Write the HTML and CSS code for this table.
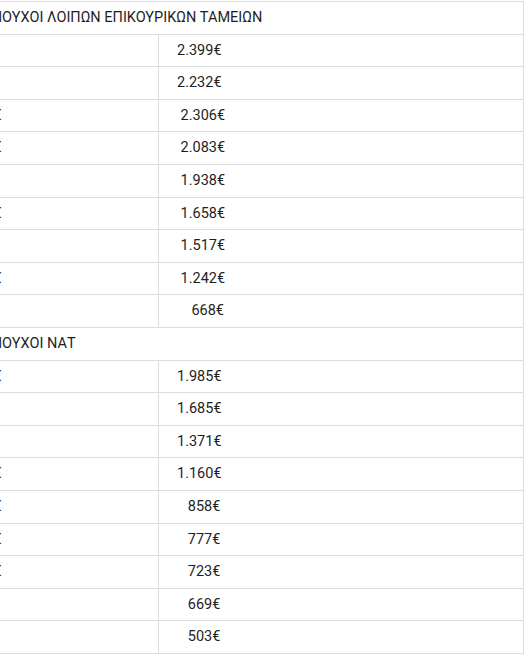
FILE: index.html
```html
<!DOCTYPE html>
<html lang="el">
<head>
<meta charset="utf-8">
<title>Συντάξεις</title>
<link rel="stylesheet" href="styles.css">
</head>
<body>
<div class="viewport">
<table class="pensions">
  <colgroup>
    <col class="c-label">
    <col class="c-value">
  </colgroup>
  <tbody>
    <tr class="section"><td colspan="2">ΣΥΝΤΑΞΙΟΥΧΟΙ ΛΟΙΠΩΝ ΕΠΙΚΟΥΡΙΚΩΝ ΤΑΜΕΙΩΝ</td></tr>
    <tr><td class="label">985€</td><td>2.399€</td></tr>
    <tr><td class="label">970€</td><td>2.232€</td></tr>
    <tr><td class="label">1.940€</td><td>&nbsp;2.306€</td></tr>
    <tr><td class="label">1.805€</td><td>&nbsp;2.083€</td></tr>
    <tr><td class="label">960€</td><td>&nbsp;1.938€</td></tr>
    <tr><td class="label">1.520€</td><td>&nbsp;1.658€</td></tr>
    <tr><td class="label">930€</td><td>&nbsp;1.517€</td></tr>
    <tr><td class="label">1.240€</td><td>&nbsp;1.242€</td></tr>
    <tr><td class="label">610€</td><td>&nbsp;&nbsp;&nbsp;&nbsp;668€</td></tr>
    <tr class="section"><td colspan="2">ΣΥΝΤΑΞΙΟΥΧΟΙ ΝΑΤ</td></tr>
    <tr><td class="label">1.650€</td><td>1.985€</td></tr>
    <tr><td class="label">940€</td><td>1.685€</td></tr>
    <tr><td class="label">915€</td><td>1.371€</td></tr>
    <tr><td class="label">1.070€</td><td>1.160€</td></tr>
    <tr><td class="label">1.010€</td><td>&nbsp;&nbsp;&nbsp;858€</td></tr>
    <tr><td class="label">1.005€</td><td>&nbsp;&nbsp;&nbsp;777€</td></tr>
    <tr><td class="label">1.000€</td><td>&nbsp;&nbsp;&nbsp;723€</td></tr>
    <tr><td class="label">650€</td><td>&nbsp;&nbsp;&nbsp;669€</td></tr>
    <tr><td class="label">480€</td><td>&nbsp;&nbsp;&nbsp;503€</td></tr>
  </tbody>
</table>
</div>
</body>
</html>
```
FILE: styles.css
```css
html, body {
  margin: 0;
  padding: 0;
  background: #ffffff;
  overflow: hidden;
}

.viewport {
  width: 530px;
  height: 657px;
  overflow: hidden;
  padding-top: 1px;
}

.pensions {
  margin-left: -74px;
  width: 597px;
  border-collapse: collapse;
  font-family: Roboto, "Liberation Sans", sans-serif;
  font-size: 14.5px;
  color: #1e1e1e;
  table-layout: fixed;
}

.c-label {
  width: 232px;
}

.c-value {
  width: 365px;
}

.pensions td {
  border: 1px solid #dcdcdc;
  padding: 7px 17px 7px 18px;
  line-height: 17.6px;
  white-space: pre;
  text-align: left;
  vertical-align: middle;
}

.pensions td.label {
  padding-left: 30px;
}

.pensions .section td {
  text-transform: uppercase;
}
```
